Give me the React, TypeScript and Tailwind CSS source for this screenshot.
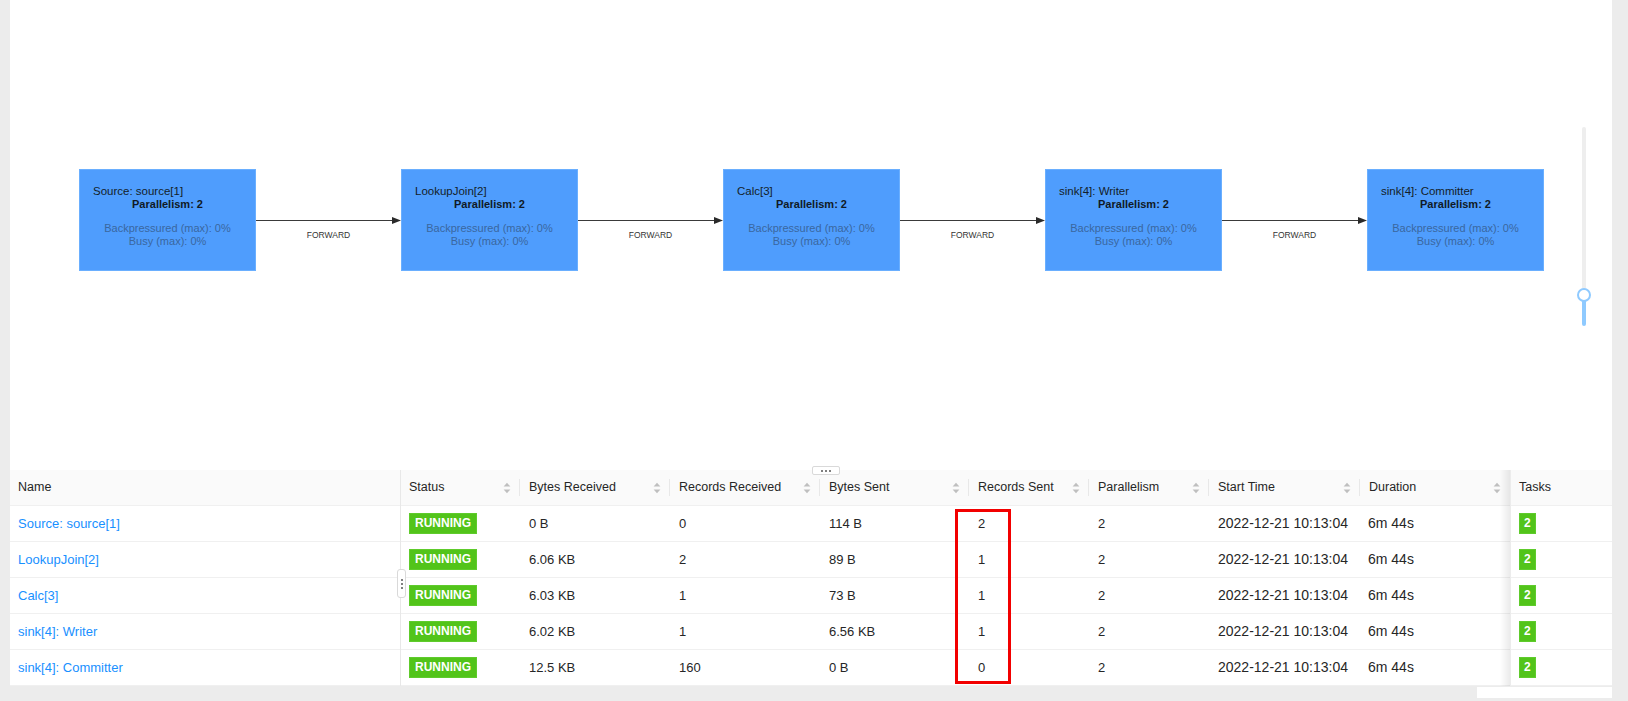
import React from "react";

interface Vertex {
  name: string;
}

interface Row {
  name: string;
  bytesIn: string;
  recordsIn: string;
  bytesOut: string;
  recordsOut: string;
  parallelism: string;
  start: string;
  duration: string;
  tasks: string;
}

const vertices: Vertex[] = [
  { name: "Source: source[1]" },
  { name: "LookupJoin[2]" },
  { name: "Calc[3]" },
  { name: "sink[4]: Writer" },
  { name: "sink[4]: Committer" },
];

const rows: Row[] = [
  { name: "Source: source[1]", bytesIn: "0 B", recordsIn: "0", bytesOut: "114 B", recordsOut: "2", parallelism: "2", start: "2022-12-21 10:13:04", duration: "6m 44s", tasks: "2" },
  { name: "LookupJoin[2]", bytesIn: "6.06 KB", recordsIn: "2", bytesOut: "89 B", recordsOut: "1", parallelism: "2", start: "2022-12-21 10:13:04", duration: "6m 44s", tasks: "2" },
  { name: "Calc[3]", bytesIn: "6.03 KB", recordsIn: "1", bytesOut: "73 B", recordsOut: "1", parallelism: "2", start: "2022-12-21 10:13:04", duration: "6m 44s", tasks: "2" },
  { name: "sink[4]: Writer", bytesIn: "6.02 KB", recordsIn: "1", bytesOut: "6.56 KB", recordsOut: "1", parallelism: "2", start: "2022-12-21 10:13:04", duration: "6m 44s", tasks: "2" },
  { name: "sink[4]: Committer", bytesIn: "12.5 KB", recordsIn: "160", bytesOut: "0 B", recordsOut: "0", parallelism: "2", start: "2022-12-21 10:13:04", duration: "6m 44s", tasks: "2" },
];

const NODE_LEFT = 69;
const NODE_STEP = 322;
const NODE_TOP = 169;

const cols =
  "grid grid-cols-[390px_120px_150px_150px_149px_120px_120px_151px_150px_102px]";

const SortIcon = () => (
  <svg width="8" height="12" viewBox="0 0 8 12" className="shrink-0">
    <path d="M4 0.8 L7.4 4.6 H0.6 Z" fill="#bfbfbf" />
    <path d="M4 11.2 L7.4 7.4 H0.6 Z" fill="#bfbfbf" />
  </svg>
);

const HeaderCell = ({
  label,
  sort = true,
  divider = true,
  first = false,
}: {
  label: string;
  sort?: boolean;
  divider?: boolean;
  first?: boolean;
}) => (
  <div
    className={`relative flex items-center justify-between h-[35px] ${
      first ? "pl-2" : "pl-[9px]"
    } pr-[9px]`}
  >
    <span>{label}</span>
    {sort && <SortIcon />}
    {divider && (
      <span className="absolute right-0 top-[9px] h-[17px] w-px bg-black/[0.07]" />
    )}
  </div>
);

const Node = ({ vertex, index }: { vertex: Vertex; index: number }) => (
  <div
    className="absolute w-[177px] h-[102px] bg-[#4f9dfd] border border-[#6aafff] text-[11px] leading-[13px] pt-[15px]"
    style={{ left: NODE_LEFT + index * NODE_STEP, top: NODE_TOP }}
  >
    <div className="pl-[13px] text-[11.5px] text-[#141d29] whitespace-nowrap">{vertex.name}</div>
    <div className="text-center font-bold text-[#101a26]">Parallelism: 2</div>
    <div className="mt-[11px] text-center text-[#3a679f]">Backpressured (max): 0%</div>
    <div className="text-center text-[#3a679f]">Busy (max): 0%</div>
  </div>
);

const Edges = () => (
  <svg className="absolute inset-0" width="1602" height="470">
    {[0, 1, 2, 3].map((i) => {
      const x1 = NODE_LEFT + 177 + i * NODE_STEP;
      const x2 = NODE_LEFT + (i + 1) * NODE_STEP;
      return (
        <g key={i}>
          <line x1={x1} y1={220.5} x2={x2 - 8} y2={220.5} stroke="#3a3a3a" strokeWidth="1" />
          <path d={`M${x2} 220.5 L${x2 - 9} 217 L${x2 - 9} 224 Z`} fill="#2a2a2a" />
          <text
            x={(x1 + x2) / 2}
            y={238}
            textAnchor="middle"
            fontSize="8.5"
            fill="#333"
            fontFamily="Liberation Sans, Arial, sans-serif"
          >
            FORWARD
          </text>
        </g>
      );
    })}
  </svg>
);

const ZoomSlider = () => (
  <div className="absolute left-[1572px] top-[127px] h-[199px] w-[4px] flex flex-col items-center">
    <div className="w-[4px] h-[168px] bg-[#eeeeee] rounded-t-full" />
    <div className="w-[4px] flex-1 bg-[#8fcaff] rounded-b-full" />
    <div className="absolute top-[161px] left-1/2 -translate-x-1/2 w-[14px] h-[14px] rounded-full bg-white border-2 border-[#8fcaff]" />
  </div>
);

const Badge = ({ text, className = "" }: { text: string; className?: string }) => (
  <span
    className={`inline-block bg-[#52c41a] border border-[#5fcb2c] text-white font-bold text-[12px] leading-[19px] ${className}`}
  >
    {text}
  </span>
);

export default function App() {
  return (
    <div className="min-h-screen bg-[#ececec] pl-[10px] pr-[16px] font-['Liberation_Sans',Arial,sans-serif] text-[13px] text-[#262626]">
      <div className="w-[1602px] bg-white">
        {/* job graph */}
        <div className="relative h-[470px] overflow-hidden">
          <Edges />
          {vertices.map((v, i) => (
            <Node key={v.name} vertex={v} index={i} />
          ))}
          <ZoomSlider />
        </div>

        {/* vertex table */}
        <div className="relative">
          <div className={`${cols} bg-[#fafafa] border-b border-[#f0f0f0] text-[12.5px] text-[#262626]`}>
            <HeaderCell label="Name" sort={false} divider={false} first />
            <HeaderCell label="Status" />
            <HeaderCell label="Bytes Received" />
            <HeaderCell label="Records Received" />
            <HeaderCell label="Bytes Sent" />
            <HeaderCell label="Records Sent" />
            <HeaderCell label="Parallelism" />
            <HeaderCell label="Start Time" />
            <HeaderCell label="Duration" divider={false} />
            <HeaderCell label="Tasks" sort={false} divider={false} />
          </div>
          {rows.map((r) => (
            <div key={r.name} className={`${cols} h-[36px] items-center border-b border-[#f0f0f0] last:border-b-0`}>
              <div className="pl-2 text-[#1890ff]">{r.name}</div>
              <div className="pl-[9px]">
                <Badge text="RUNNING" className="px-[5px]" />
              </div>
              <div className="pl-[9px]">{r.bytesIn}</div>
              <div className="pl-[9px]">{r.recordsIn}</div>
              <div className="pl-[9px]">{r.bytesOut}</div>
              <div className="pl-[9px]">{r.recordsOut}</div>
              <div className="pl-[9px]">{r.parallelism}</div>
              <div className="pl-[9px] text-[14px]">{r.start}</div>
              <div className="pl-[8px] text-[14px]">{r.duration}</div>
              <div className="pl-[9px]">
                <Badge text={r.tasks} className="px-[4px]" />
              </div>
            </div>
          ))}

          {/* name column splitter */}
          <div className="absolute left-[390px] top-0 bottom-0 w-px bg-[#e8e8e8]" />
          <div className="absolute left-[387px] top-[99px] w-[9px] h-[29px] rounded-[3px] bg-white border border-[#d9d9d9] flex flex-col items-center justify-center gap-[2px]">
            <span className="w-[2px] h-[2px] rounded-full bg-[#555]" />
            <span className="w-[2px] h-[2px] rounded-full bg-[#555]" />
            <span className="w-[2px] h-[2px] rounded-full bg-[#555]" />
          </div>

          {/* graph / table splitter */}
          <div className="absolute left-[802px] -top-[4px] w-[28px] h-[9px] rounded-[2px] bg-white border border-[#d9d9d9] flex items-center justify-center gap-[2px]">
            <span className="w-[2px] h-[2px] rounded-full bg-[#555]" />
            <span className="w-[2px] h-[2px] rounded-full bg-[#555]" />
            <span className="w-[2px] h-[2px] rounded-full bg-[#555]" />
          </div>

          {/* fixed tasks column shadow */}
          <div className="absolute left-[1490px] top-0 bottom-0 w-[10px] bg-gradient-to-l from-black/[0.08] to-transparent" />
          <div className="absolute left-[1500px] top-0 bottom-0 w-px bg-[#ececec]" />

          {/* annotation */}
          <div className="absolute left-[945px] top-[39px] w-[56px] h-[175px] border-[3px] border-[#f20000]" />
        </div>
      </div>
      <div className="flex justify-end pt-px">
        <div className="w-[135px] h-[11px] bg-white" />
      </div>
    </div>
  );
}
